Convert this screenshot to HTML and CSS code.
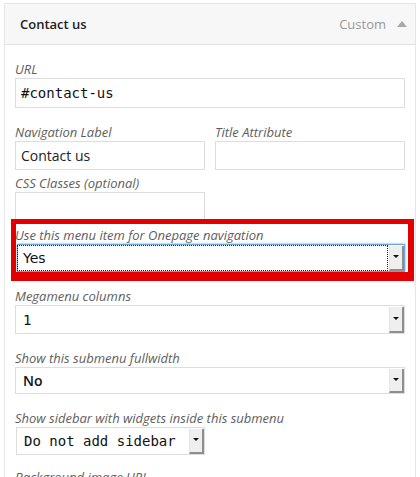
FILE: index.html
```html
<!DOCTYPE html>
<html>
<head>
<meta charset="utf-8">
<link rel="stylesheet" href="styles.css">
</head>
<body>
<div class="panel">
  <div class="panel-header">
    <span class="panel-title">Contact us</span>
    <span class="panel-meta">Custom <span class="caret-up"></span></span>
  </div>
  <div class="panel-body">
    <div class="field field-url">
      <label class="label">URL</label>
      <div class="input input-tall mono">#contact-us</div>
    </div>
    <div class="row">
      <div class="field field-tight">
        <label class="label">Navigation Label</label>
        <div class="input sans">Contact us</div>
      </div>
      <div class="field field-tight">
        <label class="label">Title Attribute</label>
        <div class="input"></div>
      </div>
    </div>
    <div class="field field-css">
      <label class="label">CSS Classes (optional)</label>
      <div class="input half"></div>
    </div>
    <div class="field highlight">
      <label class="label">Use this menu item for Onepage navigation</label>
      <div class="select select-focus h28">
        <span class="select-value sans-alt">Yes</span>
        <span class="select-arrow"></span>
      </div>
    </div>
    <div class="field">
      <label class="label">Megamenu columns</label>
      <div class="select h29">
        <span class="select-value mono">1</span>
        <span class="select-arrow"></span>
      </div>
    </div>
    <div class="field">
      <label class="label">Show this submenu fullwidth</label>
      <div class="select h27">
        <span class="select-value sans-bold">No</span>
        <span class="select-arrow"></span>
      </div>
    </div>
    <div class="field field-last">
      <label class="label">Show sidebar with widgets inside this submenu</label>
      <div class="select select-inline h28">
        <span class="select-value mono">Do not add sidebar</span>
        <span class="select-arrow"></span>
      </div>
    </div>
    <div class="field">
      <label class="label">Background image URL</label>
      <div class="input"></div>
    </div>
  </div>
</div>
</body>
</html>
```
FILE: styles.css
```css
html, body {
  margin: 0;
  padding: 0;
  background: #fff;
  overflow: hidden;
  height: 477px;
}
body {
  font-family: "Open Sans", "DejaVu Sans", sans-serif;
  color: #333;
}
.panel {
  margin: 3px 0 0 4px;
  width: 412px;
  box-sizing: border-box;
  border: 1px solid #e5e5e5;
  border-bottom: none;
}
.panel-header {
  height: 40px;
  background: #f7f7f7;
  border-bottom: 1px solid #e1e1e1;
  display: flex;
  align-items: center;
  justify-content: space-between;
  padding: 0 8px 0 15px;
}
.panel-title {
  font-size: 13px;
  font-weight: 600;
  color: #222;
}
.panel-meta {
  font-size: 13px;
  color: #999;
  display: flex;
  align-items: center;
  gap: 11px;
}
.caret-up {
  width: 0;
  height: 0;
  border-left: 5px solid transparent;
  border-right: 5px solid transparent;
  border-bottom: 6px solid #aaa;
  margin-top: -1px;
}
.panel-body {
  padding: 15px 10px 0 10px;
}
.field {
  margin-bottom: 15px;
}
.field-tight {
  margin-bottom: 4px;
}
.field-css {
  margin-bottom: 5px;
}
.field-last {
  margin-bottom: 13px;
}
.label {
  display: block;
  font-style: italic;
  font-size: 13px;
  line-height: 18px;
  color: #5e5e5e;
}
.row {
  display: grid;
  grid-template-columns: 1fr 1fr;
  gap: 10px;
}
.input {
  box-sizing: border-box;
  height: 29px;
  border: 1px solid #ddd;
  background: #fff;
  padding: 0 5px;
  display: flex;
  align-items: center;
  color: #222;
}
.input-tall {
  height: 30px;
}
.half {
  width: 190px;
}
.mono {
  font-family: "DejaVu Sans Mono", monospace;
  font-size: 14px;
  color: #111;
}
.sans {
  font-family: "Open Sans", sans-serif;
  font-size: 14px;
  color: #222;
}
.sans-alt {
  font-family: "DejaVu Sans", sans-serif;
  font-size: 14px;
  color: #111;
}
.sans-bold {
  font-family: "Open Sans", sans-serif;
  font-weight: 600;
  font-size: 14px;
  color: #111;
}
.select {
  box-sizing: border-box;
  border: 1px solid #ddd;
  background: #fff;
  display: flex;
}
.h27 { height: 27px; }
.h28 { height: 28px; }
.h29 { height: 29px; }
.select-inline {
  width: 189px;
  margin-left: 1px;
}
.select-value {
  flex: 1;
  display: flex;
  align-items: center;
  padding-left: 7px;
  white-space: nowrap;
}
.select-arrow {
  width: 12px;
  margin: 1px 0 0 0;
  background: #efefef;
  border-left: 1px solid #e4e4e4;
  border-right: 2px solid #8e8e8e;
  border-bottom: 2px solid #8e8e8e;
  display: flex;
  align-items: center;
  justify-content: center;
}
.select-arrow::after {
  content: "";
  width: 0;
  height: 0;
  border-left: 3px solid transparent;
  border-right: 3px solid transparent;
  border-top: 3px solid #111;
  margin-bottom: 2px;
}
.highlight {
  position: relative;
}
.highlight::before {
  content: "";
  position: absolute;
  left: -4px;
  right: -9px;
  top: -7px;
  bottom: -9px;
  border-style: solid;
  border-color: #e30000;
  border-width: 5px 6px 9px 5px;
  pointer-events: none;
}
.select-focus {
  margin-left: 2px;
  border-color: #6aa6dc;
  box-shadow: 0 0 2px rgba(30, 140, 190, 0.8);
}
.select-focus .select-value {
  margin: 1px 2px 1px 0;
  outline: 1px dotted #222;
  outline-offset: 0;
  padding-left: 5px;
}
```
